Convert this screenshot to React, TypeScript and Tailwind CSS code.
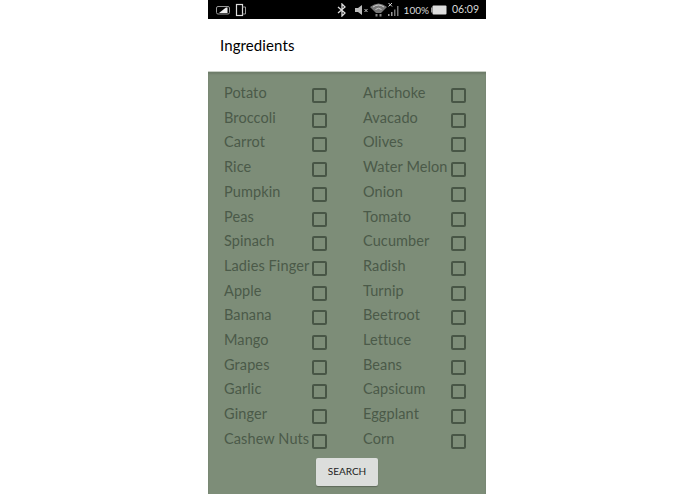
import React from "react";

const rows: [string, string][] = [
  ["Potato", "Artichoke"],
  ["Broccoli", "Avacado"],
  ["Carrot", "Olives"],
  ["Rice", "Water Melon"],
  ["Pumpkin", "Onion"],
  ["Peas", "Tomato"],
  ["Spinach", "Cucumber"],
  ["Ladies Finger", "Radish"],
  ["Apple", "Turnip"],
  ["Banana", "Beetroot"],
  ["Mango", "Lettuce"],
  ["Grapes", "Beans"],
  ["Garlic", "Capsicum"],
  ["Ginger", "Eggplant"],
  ["Cashew Nuts", "Corn"],
];

function Item({ label }: { label: string }) {
  return (
    <div className="flex h-[24.71px] w-[139px] shrink-0 items-start">
      <span className="w-[88px] shrink-0 whitespace-nowrap text-[14.5px] leading-[19px] tracking-[0.1px] text-[#4b5a49]">
        {label}
      </span>
      <span className="mt-[5px] h-[15px] w-[15px] shrink-0 rounded-[2px] border-2 border-[#485646]" />
    </div>
  );
}

function StatusBar() {
  return (
    <div className="flex h-[19px] items-center bg-black pl-[7px] pr-[7px] text-[#d8d8d8]">
      <svg width="36" height="14" viewBox="0 0 36 14" fill="none">
        <rect x="1.5" y="3.5" width="13" height="7.5" rx="1.5" stroke="#999" />
        <path d="M4 10 L11 4.5 L12.5 4.5 L12.5 10 Z" fill="#eee" />
        <rect x="21.5" y="1.5" width="6" height="11" stroke="#ddd" strokeWidth="1.2" />
        <path d="M27.5 4 H30.5 V11 H27.5" stroke="#999" />
      </svg>
      <div className="ml-auto flex items-center">
        <svg width="10" height="14" viewBox="0 0 10 14" fill="none" stroke="#ddd" strokeWidth="1.3">
          <path d="M1 4 L8 10 L5 13 V1 L8 4 L1 10" />
        </svg>
        <svg className="ml-[8px]" width="14" height="12" viewBox="0 0 14 12">
          <path d="M0 4 H3 L7 1 V11 L3 8 H0 Z" fill="#bbb" />
          <path d="M9.5 5 L12.5 8 M12.5 5 L9.5 8" stroke="#ccc" strokeWidth="1" />
        </svg>
        <svg className="ml-0" width="19" height="15" viewBox="0 0 19 15" fill="none">
          <path d="M1 5 Q9.5 -2 18 5 L12 11 H7 Z" fill="#777" />
          <path d="M4 5 Q9.5 1 15 5 M6.5 7.5 Q9.5 5 12.5 7.5" stroke="#ccc" strokeWidth="1" />
          <rect x="6.5" y="12" width="2" height="2.5" fill="#888" />
          <rect x="10.5" y="12" width="2" height="2.5" fill="#888" />
        </svg>
        <svg className="ml-0" width="13" height="15" viewBox="0 0 13 15">
          <path d="M0.5 1 L4 4.5 M4 1 L0.5 4.5" stroke="#ddd" strokeWidth="1" />
          <rect x="0" y="12" width="1.5" height="2" fill="#999" />
          <rect x="3" y="10" width="1.5" height="4" fill="#999" />
          <rect x="6" y="7.5" width="1.5" height="6.5" fill="#777" />
          <rect x="9" y="4" width="1.5" height="10" fill="#777" />
        </svg>
        <span className="ml-[3px] text-[10px] leading-none">100%</span>
        <svg className="ml-[2px]" width="16" height="10" viewBox="0 0 16 10">
          <rect x="0" y="2.5" width="1.5" height="5" fill="#999" />
          <rect x="1.5" y="0.5" width="14" height="9" rx="1" fill="#ddd" />
        </svg>
        <span className="ml-[5px] text-[10.5px] leading-none">06:09</span>
      </div>
    </div>
  );
}

export default function App() {
  return (
    <div className="h-[494px] w-[695px] overflow-hidden bg-white pl-[208px] font-['Lato',sans-serif]">
      <div className="flex h-full w-[278px] flex-col">
        <StatusBar />
        <div className="flex h-[53px] items-center border-b border-[#c9cfc6] pl-[12px] text-[15px] tracking-[0.1px] text-black">
          Ingredients
        </div>
        <div className="flex flex-1 flex-col bg-[#7d8d78] pl-[16px] pt-[11px] shadow-[inset_0_2px_2px_rgba(0,0,0,0.12)]">
          {rows.map(([left, right]) => (
            <div key={left} className="flex">
              <Item label={left} />
              <Item label={right} />
            </div>
          ))}
          <button
            type="button"
            className="ml-[92px] mt-[4px] h-[28px] w-[62px] rounded-[2px] bg-[#dcdedc] text-[10px] text-[#222] shadow-[0_1px_1px_rgba(0,0,0,0.25)]"
          >
            SEARCH
          </button>
        </div>
      </div>
    </div>
  );
}
